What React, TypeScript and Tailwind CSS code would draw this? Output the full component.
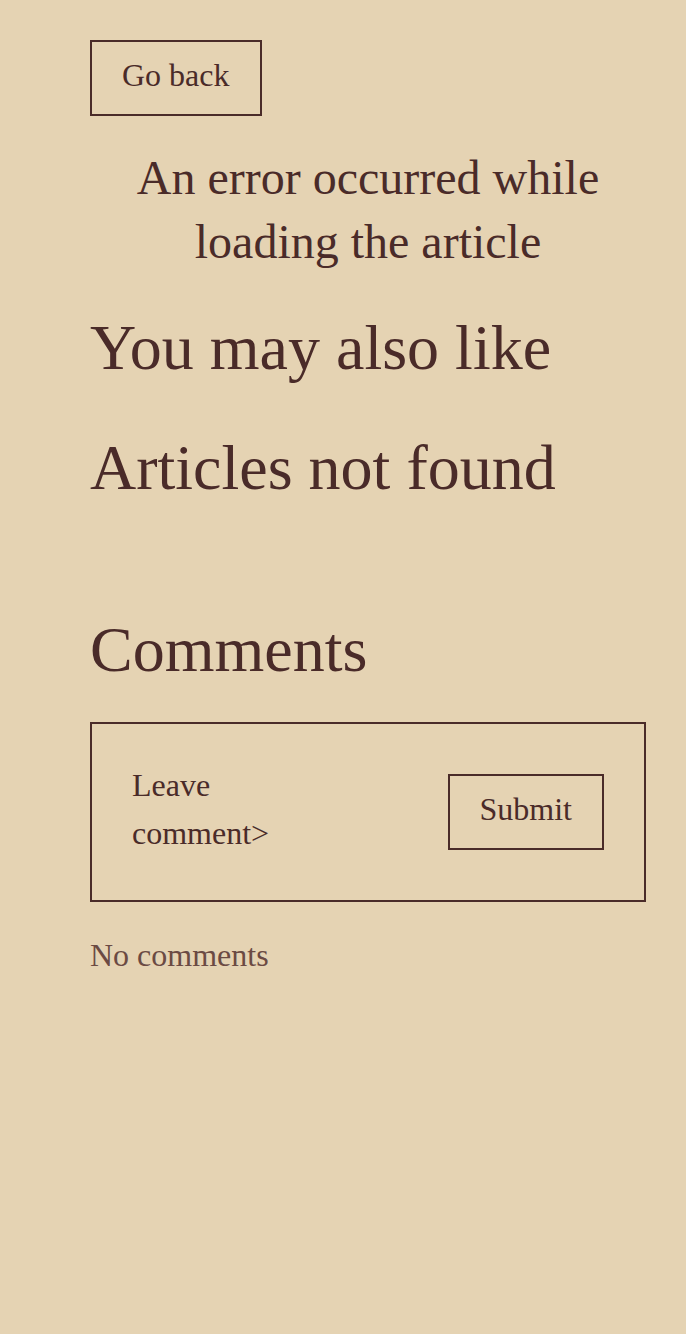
export default function App() {
  return (
    <main
      className="min-h-screen bg-[#e5d3b3] text-[#4a2b29]"
      style={{ fontFamily: '"Liberation Serif", "Times New Roman", serif' }}
    >
      <div className="ml-[90px] mr-[40px] pt-[40px] pb-20">
        <button className="h-[76px] border-2 border-[#4a2b29] px-[30px] pb-[6px] text-[32px] leading-[40px]">
          Go back
        </button>

        <p className="mt-[30px] text-center text-[48px] leading-[64px]">
          An error occurred while loading the article
        </p>

        <h2 className="mt-[34px] text-[64px] leading-[80px]">You may also like</h2>
        <h2 className="mt-[40px] text-[64px] leading-[80px]">Articles not found</h2>

        <h2 className="mt-[102px] text-[64px] leading-[80px]">Comments</h2>

        <div className="mt-[32px] flex items-start justify-between border-2 border-[#4a2b29] px-[40px] pt-[37px] pb-[43px]">
          <div className="w-[150px] text-[32px] leading-[48px]">Leave comment&gt;</div>
          <button className="mt-[13px] h-[76px] border-2 border-[#4a2b29] px-[30px] pb-[6px] text-[32px] leading-[40px]">
            Submit
          </button>
        </div>

        <p className="mt-[29px] text-[32px] leading-[48px] text-[#6b4a43]">No comments</p>
      </div>
    </main>
  );
}
